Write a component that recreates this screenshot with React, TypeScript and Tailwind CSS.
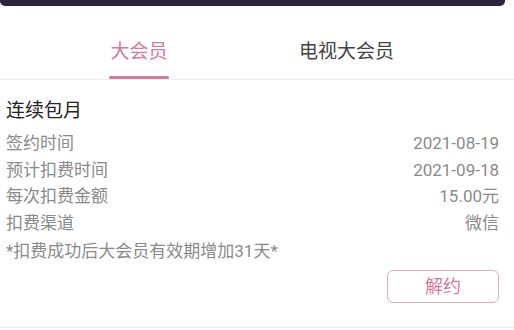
import React from "react";

const rows: [string, string][] = [
  ["签约时间", "2021-08-19"],
  ["预计扣费时间", "2021-09-18"],
  ["每次扣费金额", "15.00元"],
  ["扣费渠道", "微信"],
];

export default function App() {
  return (
    <div
      className="w-[514px] h-[330px] bg-white overflow-hidden"
      style={{ fontFamily: '"Roboto", "Noto Sans CJK SC", sans-serif' }}
    >
      <div className="h-[6px] w-[505px] bg-[#2d2240] rounded-b-[5px]" />
      <div className="flex pl-[109px] gap-[130px] pt-[31px] border-b border-[#ececec]">
        <div className="flex flex-col items-center">
          <span className="text-[19px] leading-[30px] text-[#d27aa0]">大会员</span>
          <div className="mt-[9px] h-[3px] w-[60px] rounded-full bg-[#d27aa0]" />
        </div>
        <div className="flex flex-col">
          <span className="text-[19px] leading-[30px] text-[#444444]">电视大会员</span>
        </div>
      </div>
      <div className="px-[6px] pr-[15px] pt-[17px]">
        <div className="text-[19px] leading-[28px] text-[#222222]">连续包月</div>
        <div className="mt-[5px] flex flex-col">
          {rows.map(([k, v]) => (
            <div key={k} className="flex justify-between text-[17px] leading-[26.6px] text-[#8a8a8a]">
              <span>{k}</span>
              <span>{v}</span>
            </div>
          ))}
        </div>
        <div className="mt-[2px] text-[17px] leading-[26px] text-[#8a8a8a]">*扣费成功后大会员有效期增加31天*</div>
        <div className="mt-[6px] flex justify-end">
          <button className="w-[112px] h-[33px] rounded-[6px] border-[1.5px] border-[#dcaec3] text-[18px] text-[#d27aa0] leading-none">
            解约
          </button>
        </div>
      </div>
      <div className="mt-[24px] border-b border-[#ececec]" />
    </div>
  );
}
